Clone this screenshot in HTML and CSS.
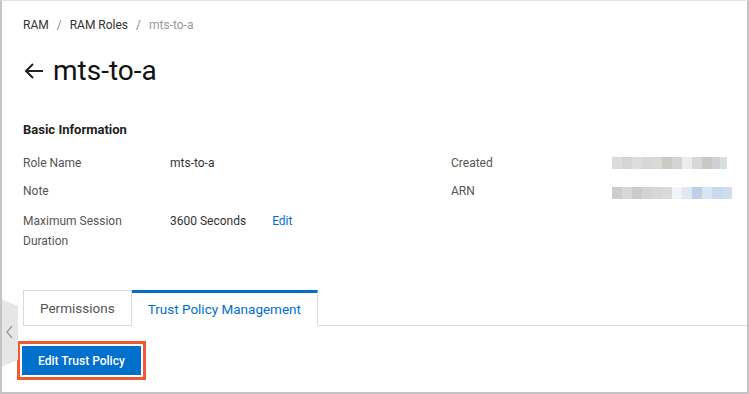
FILE: index.html
```html
<!DOCTYPE html>
<html>
    <head>
        <title>mts-to-a - RAM Roles</title>
        <link rel="stylesheet" href="styles.css">
    </head>
    <body>
        <div id="frame">
            <div id="page">
                <div class="breadcrumb">
                    <a>RAM</a><span class="sep">/</span><a>RAM Roles</a><span class="sep">/</span><span class="current">mts-to-a</span>
                </div>
                <h1>
                    <svg class="back" width="20" height="16" viewBox="0 0 20 16">
                        <path d="M19 8H2M9 1L2 8l7 7" fill="none" stroke="#222" stroke-width="2"/>
                    </svg>mts-to-a
                </h1>

                <h2>Basic Information</h2>
                <div class="info">
                    <div class="label">Role Name</div>
                    <div class="value">mts-to-a</div>
                    <div class="label">Created</div>
                    <div class="value"><div class="blur created"></div></div>

                    <div class="label">Note</div>
                    <div class="value"></div>
                    <div class="label">ARN</div>
                    <div class="value"><div class="blur arn"></div></div>

                    <div class="label">Maximum Session Duration</div>
                    <div class="value">3600 Seconds <a class="link">Edit</a></div>
                    <div class="label"></div>
                    <div class="value"></div>
                </div>

                <div class="tabs">
                    <div class="tab">Permissions</div>
                    <div class="tab active">Trust Policy Management</div>
                    <div class="tab-rest"></div>
                </div>
                <div class="toolbar">
                    <div class="highlight">
                        <button class="primary">Edit Trust Policy</button>
                    </div>
                </div>
            </div>
            <div id="toggle">
                <svg width="17" height="68" viewBox="0 0 17 68">
                    <polygon points="0,0 17,7 17,61 0,68" fill="#e6e6e6"/>
                    <polyline points="11,27 6,33 11,39" fill="none" stroke="#a0a0a0" stroke-width="1.5"/>
                </svg>
            </div>
        </div>
    </body>
</html>
```

FILE: styles.css
```css
html, body {
    margin: 0;
    background-color: #fff;
}
body {
    font-family: Roboto, "Liberation Sans", sans-serif;
    font-size: 12px;
    color: #333;
}
#frame {
    position: relative;
    box-sizing: border-box;
    width: 749px;
    height: 394px;
    border: 2px solid #c4c4c4;
    border-top: 1px solid #e4e4e4;
    overflow: hidden;
}
#page {
    padding: 14px 0 0 21px;
}
.breadcrumb {
    height: 20px;
    line-height: 20px;
    color: #333;
}
.breadcrumb .sep {
    margin: 0 8px;
    color: #888;
}
.breadcrumb .current {
    color: #999;
}
h1 {
    display: flex;
    align-items: center;
    margin: 16px 0 0;
    height: 40px;
    line-height: 40px;
    font-size: 28px;
    font-weight: normal;
    color: #111;
}
h1 .back {
    margin: 0 9px 0 1px;
}
h2 {
    margin: 29px 0 0;
    font-size: 13px;
    font-weight: bold;
    color: #222;
    line-height: 20px;
}
.info {
    display: grid;
    grid-template-columns: 147px 281px 161px auto;
    grid-template-rows: 28px 30px auto;
    margin-top: 13px;
    line-height: 20px;
}
.info .label {
    color: #555;
    padding-right: 40px;
}
.info .value {
    color: #333;
}
.link {
    color: #0070cc;
    margin-left: 23px;
}
.blur {
    height: 12px;
    margin-top: 4px;
}
.blur.created {
    width: 115px;
    background: linear-gradient(90deg,
        #dddcda 0 10px, #d6d4d8 10px 20px, #dedddd 20px 30px, #d9d7d6 30px 40px,
        #dcd8d5 40px 50px, #c9c9c6 50px 60px, #d3d4d8 60px 70px, #ececec 70px 80px,
        #d8d8d6 80px 90px, #cac8c3 90px 100px, #d2cfd2 100px 108px, #d7e0df 108px 115px);
}
.blur.arn {
    width: 120px;
    margin-top: 6px;
    background: linear-gradient(90deg,
        #cdcccb 0 10px, #d6d8da 10px 20px, #cdcbc8 20px 30px, #d4d3d3 30px 40px,
        #d8d6d6 40px 50px, #dcdad8 50px 60px, #f2f3f5 60px 70px, #e2e8f2 70px 80px,
        #bfcfe8 80px 90px, #d9e5f2 90px 100px, #cad8ef 100px 110px, #d0dcf0 110px 120px);
}
.tabs {
    display: flex;
    margin-top: 39px;
    margin-right: -2px;
    font-size: 13.5px;
}
.tab {
    box-sizing: border-box;
    height: 36px;
    line-height: 34px;
    padding: 0 16px;
    border: 1px solid #dadada;
    color: #555;
    background: #fff;
}
.tab.active {
    border-top: 3px solid #0070cc;
    border-bottom-color: transparent;
    border-left: none;
    line-height: 32px;
    color: #0070cc;
}
.tab-rest {
    flex: 1;
    border-bottom: 1px solid #dadada;
}
.toolbar {
    margin-top: 15px;
}
.highlight {
    display: inline-block;
    margin-left: -6px;
    border: 3px solid #f05a32;
    padding: 2px;
}
button.primary {
    display: block;
    height: 29px;
    padding: 0 16px;
    border: none;
    border-radius: 0;
    background-color: #0070cc;
    color: #fff;
    font-family: inherit;
    font-size: 12px;
    font-weight: 500;
}
#toggle {
    position: absolute;
    left: -1px;
    top: 298px;
    line-height: 0;
}
```
